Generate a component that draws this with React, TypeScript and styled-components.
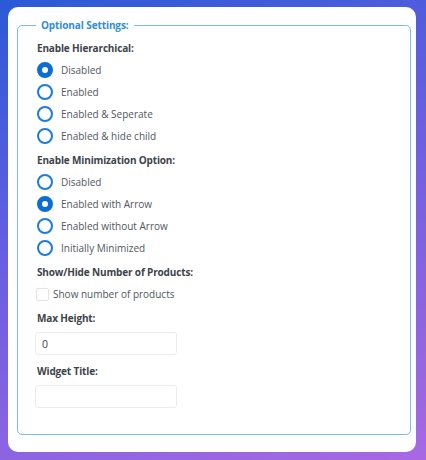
import styled, { createGlobalStyle } from 'styled-components';

const GlobalStyle = createGlobalStyle`
  html, body {
    margin: 0;
    padding: 0;
  }
  body {
    font-family: "Open Sans", "Noto Sans", sans-serif;
  }
`;

const Frame = styled.div`
  width: 426px;
  height: 460px;
  box-sizing: border-box;
  padding: 7px 10px 8px 8px;
  background: linear-gradient(160deg, #2a5ad6 0%, #6b5fe0 45%, #a868e4 100%);
  display: flex;
`;

const Card = styled.div`
  flex: 1;
  background: #fff;
  border-radius: 10px;
  padding: 10px 5px 17px 9px;
  display: flex;
`;

const Fieldset = styled.fieldset`
  flex: 1;
  margin: 0;
  min-width: 0;
  border: 1px solid #7cbde9;
  border-radius: 5px;
  padding: 7px 20px 20px 19px;
`;

const Legend = styled.legend`
  padding: 0 5px;
  margin-left: -1px;
  font-size: 10px;
  line-height: 16px;
  font-weight: 700;
  letter-spacing: -0.1px;
  color: #2f8ddb;
`;

const Group = styled.div`
  display: flex;
  flex-direction: column;
  margin-bottom: 5px;
`;

const Label = styled.div<{ $spaced?: boolean }>`
  font-size: 10px;
  line-height: 16px;
  font-weight: 700;
  letter-spacing: -0.15px;
  color: #3c434a;
  margin-bottom: ${({ $spaced }) => ($spaced ? '6px' : '3px')};
`;

const Option = styled.label`
  display: flex;
  align-items: center;
  height: 22px;
  gap: 8px;
  font-size: 10px;
  color: #50575e;
  cursor: pointer;
`;

const Radio = styled.input.attrs({ type: 'radio' })`
  appearance: none;
  margin: 0;
  width: 16px;
  height: 16px;
  box-sizing: border-box;
  border-radius: 50%;
  border: 2px solid #1b7be0;
  background: #fff;

  &:checked {
    border: 5px solid #0b6ed8;
  }
`;

const CheckRow = styled(Option)`
  gap: 4px;
  margin-left: -1px;
`;

const Checkbox = styled.input.attrs({ type: 'checkbox' })`
  appearance: none;
  margin: 0;
  width: 13px;
  height: 13px;
  border: 1px solid #e3e3e3;
  border-radius: 2px;
  background: #fff;
`;

const TextInput = styled.input`
  display: block;
  width: 142px;
  height: 23px;
  box-sizing: border-box;
  margin: 0 0 8px -2px;
  padding: 0 6px;
  border: 1px solid #ececec;
  border-radius: 3px;
  font-family: inherit;
  font-size: 10.5px;
  color: #3c434a;
  outline: none;
`;

const hierarchical = ['Disabled', 'Enabled', 'Enabled & Seperate', 'Enabled & hide child'];
const minimization = ['Disabled', 'Enabled with Arrow', 'Enabled without Arrow', 'Initially Minimized'];

function RadioGroup({ name, title, options, checked }: { name: string; title: string; options: string[]; checked: number }) {
  return (
    <Group>
      <Label>{title}</Label>
      {options.map((o, i) => (
        <Option key={o}>
          <Radio name={name} defaultChecked={i === checked} />
          {o}
        </Option>
      ))}
    </Group>
  );
}

export default function App() {
  return (
    <>
      <GlobalStyle />
      <Frame>
        <Card>
          <Fieldset>
            <Legend>Optional Settings:</Legend>
            <RadioGroup name="hier" title="Enable Hierarchical:" options={hierarchical} checked={0} />
            <RadioGroup name="mini" title="Enable Minimization Option:" options={minimization} checked={1} />
            <Group>
              <Label>Show/Hide Number of Products:</Label>
              <CheckRow>
                <Checkbox />
                Show number of products
              </CheckRow>
            </Group>
            <Label $spaced>Max Height:</Label>
            <TextInput defaultValue="0" />
            <Label $spaced>Widget Title:</Label>
            <TextInput defaultValue="" />
          </Fieldset>
        </Card>
      </Frame>
    </>
  );
}
